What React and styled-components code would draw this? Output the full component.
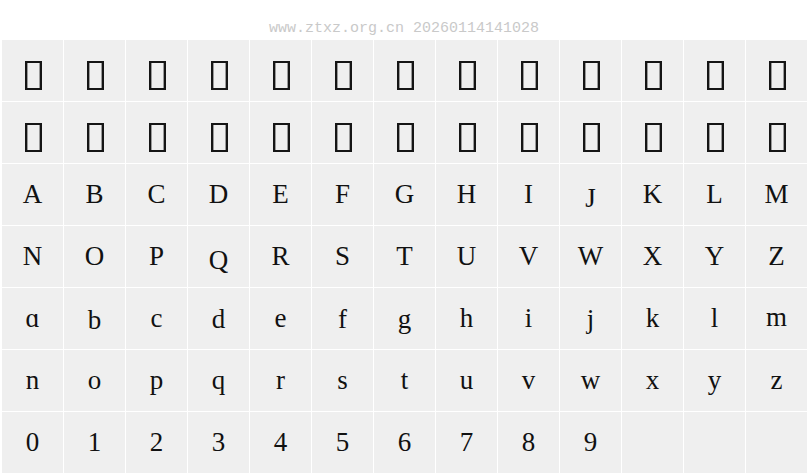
import React from "react";
import styled, { createGlobalStyle } from "styled-components";

const GlobalStyle = createGlobalStyle`
  html, body {
    margin: 0;
    padding: 0;
    background: #ffffff;
  }
`;

const Page = styled.div`
  width: 808px;
  height: 476px;
  overflow: hidden;
`;

const Header = styled.div`
  height: 40px;
  display: flex;
  align-items: center;
  justify-content: center;
  padding-top: 16px;
  box-sizing: border-box;
  font-family: "Liberation Mono", "DejaVu Sans Mono", monospace;
  font-size: 15px;
  color: #c9c9c9;
`;

const Grid = styled.div`
  display: grid;
  grid-template-columns: repeat(13, 61px);
  grid-auto-rows: 61px;
  gap: 1px;
  padding-left: 2px;
`;

const Cell = styled.div`
  background: #efefef;
  display: flex;
  align-items: center;
  justify-content: center;
  font-family: "Liberation Serif", "DejaVu Serif", serif;
  font-size: 27px;
  color: #111;
`;

const Glyph = styled.span`
  position: relative;
  top: ${(p) => p.$dy || 0}px;
`;

const Tofu = styled.span`
  display: inline-block;
  width: 17px;
  height: 29px;
  box-sizing: border-box;
  margin-top: 9px;
  margin-left: 2px;
  border: 2px solid #151515;
  box-shadow: inset 1px 0 0 #9a9a9a, inset -1px 0 0 #9a9a9a;
`;

const upper = "ABCDEFGHIJKLMNOPQRSTUVWXYZ".split("");
const lower = "ɑbcdefghijklmnopqrstuvwxyz".split("");
const digits = "0123456789".split("");

// small per-glyph shifts seen in the preview
const shifts = { J: 4, Q: 4, b: 2, d: 1, f: 1, g: 1, j: 1, m: -1 };

export default function App() {
  return (
    <Page>
      <GlobalStyle />
      <Header>www.ztxz.org.cn 20260114141028</Header>
      <Grid>
        {Array.from({ length: 26 }).map((_, i) => (
          <Cell key={"t" + i}>
            <Tofu />
          </Cell>
        ))}
        {[...upper, ...lower, ...digits].map((c, i) => (
          <Cell key={"c" + i}>
            <Glyph $dy={shifts[c]}>{c}</Glyph>
          </Cell>
        ))}
        <Cell />
        <Cell />
        <Cell />
      </Grid>
    </Page>
  );
}
